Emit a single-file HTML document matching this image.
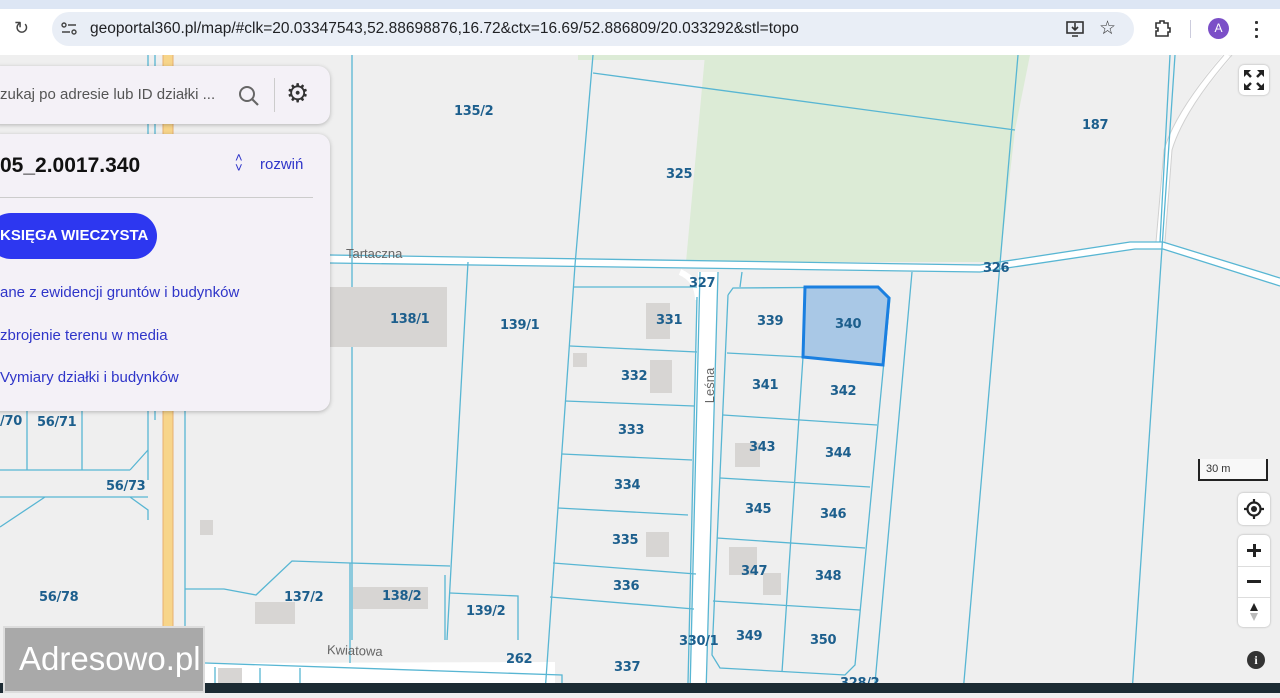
<!DOCTYPE html>
<html><head><meta charset="utf-8"><style>
*{margin:0;padding:0;box-sizing:border-box}
body{width:1280px;height:693px;overflow:hidden;position:relative;font-family:"Liberation Sans",sans-serif;background:#efefef}
.top{position:absolute;left:0;top:0;width:1280px;height:55px;background:#fff}
.tabs{position:absolute;left:0;top:0;width:1280px;height:9px;background:#dde6f4}
.url{position:absolute;left:52px;top:12px;width:1082px;height:34px;border-radius:17px;background:#e9eef6}
.url span{position:absolute;left:38px;top:8px;font-size:15.5px;color:#202124}
.map{position:absolute;left:0;top:55px}
.lbl{position:absolute;font-weight:bold;font-size:13px;color:#1d5f8d;font-family:"DejaVu Sans","Liberation Sans",sans-serif;letter-spacing:-0.3px}
.panel{position:absolute;background:#f4f1f7;border-radius:12px;box-shadow:0 1px 4px rgba(0,0,0,.25)}
.link{position:absolute;left:0;font-size:15px;color:#2f35c9}
.btn{position:absolute;background:#fff;border-radius:5px;box-shadow:0 0 2px rgba(0,0,0,.3)}
</style></head><body>
<div class="map">
<svg width="1280" height="638" viewBox="0 55 1280 638" xmlns="http://www.w3.org/2000/svg">
<rect x="0" y="55" width="1280" height="638" fill="#efefef"/>
<polygon points="705,55 1030,55 1015,130 1000,262 686,262" fill="#dcebd6"/>
<polygon points="578,55 705,55 705,60 578,60" fill="#dcebd6"/>
<!-- roads -->
<polygon points="330,255 980,265 1130,242 1163,242 1280,278 1280,286 1163,249 1135,249 980,272 330,263" fill="#fff"/>
<path d="M1228,55 Q1180,110 1168,150 L1160,242" stroke="#fff" stroke-width="8" fill="none"/>
<path d="M1224,55 Q1176,110 1164,150 L1156,242 M1232,55 Q1184,110 1172,150 L1165,242" stroke="#d0d0d0" stroke-width="1" fill="none"/>
<polygon points="698,272 718,272 706,693 690,693" fill="#fff"/>
<path d="M680,272 Q698,280 698,300" stroke="#fff" stroke-width="6" fill="none"/>
<polygon points="205,663 555,662 555,683 205,683" fill="#fff"/>
<rect x="163" y="55" width="10" height="628" fill="#f7d58a"/>
<path d="M163,55 V683 M173,55 V683" stroke="#e7b070" stroke-width="1"/>
<g stroke="#58b6d3" stroke-width="1.3" fill="none">
<path d="M330,255 L980,265 L1130,242 L1163,242 L1280,278"/>
<path d="M330,263 L980,272 L1135,249 L1163,249 L1280,286"/>
<path d="M593,55 L575,265 M593,73 L1015,130 M1018,55 L963,693 M1175,55 L1132,693 M1170,55 L1160,242"/>
<path d="M352,55 V640 M148,55 V480 M155,55 V420 M185,270 V683"/>
<path d="M0,470 H130 M27,411 V470 M82,411 V470 M0,497 H148 M0,527 L45,497 M130,470 L148,450 M130,497 L148,510 V520"/>
<path d="M468,262 L447,640 M575,265 L545,693"/>
<path d="M185,589 L224,589 L256,595 L292,561 L350,563 L450,566 M450,593 L518,596 L518,640 M205,663 L562,675 L562,693"/>
<path d="M573,287 L697,287 M570,346 L697,352 M565,401 L694,406 M562,454 L692,460 M558,508 L688,515 M553,563 L696,574 M550,597 L694,609 M697,297 L688,683 M700,272 L690,693 M718,272 L706,693"/>
<path d="M742,272 L740,287 M728,295 L733,288 L878,287 L890,298 L855,665 L845,675 L720,668 L712,655 L728,295"/>
<path d="M803,357 L782,672 M727,353 L803,357 M723,415 L877,425 M720,478 L870,487 M717,538 L865,548 M713,601 L860,610 M912,272 L875,683"/>
<path d="M445,575 V640 M350,563 V663 M215,667 V693 M260,668 V693 M300,668 V693"/>
</g>
<polygon points="805,287 878,287 889,298 883,365 803,357" fill="#a9c8e6" stroke="#1a7fe0" stroke-width="3"/>
<g fill="#d7d5d3">
<rect x="330" y="287" width="117" height="60"/><rect x="646" y="303" width="24" height="36"/><rect x="573" y="353" width="14" height="14"/><rect x="650" y="360" width="22" height="33"/>
<rect x="735" y="443" width="25" height="24"/><rect x="646" y="532" width="23" height="25"/><rect x="729" y="547" width="28" height="28"/><rect x="763" y="573" width="18" height="22"/>
<rect x="200" y="520" width="13" height="15"/><rect x="255" y="602" width="40" height="22"/><rect x="353" y="587" width="75" height="22"/><rect x="218" y="668" width="24" height="15"/>
</g>
</svg>
</div>
<div class="lbl" style="left:454px;top:104px">135/2</div>
<div class="lbl" style="left:666px;top:167px">325</div>
<div class="lbl" style="left:1082px;top:118px">187</div>
<div class="lbl" style="left:983px;top:261px">326</div>
<div class="lbl" style="left:689px;top:276px">327</div>
<div class="lbl" style="left:390px;top:312px">138/1</div>
<div class="lbl" style="left:500px;top:318px">139/1</div>
<div class="lbl" style="left:656px;top:313px">331</div>
<div class="lbl" style="left:621px;top:369px">332</div>
<div class="lbl" style="left:618px;top:423px">333</div>
<div class="lbl" style="left:614px;top:478px">334</div>
<div class="lbl" style="left:612px;top:533px">335</div>
<div class="lbl" style="left:613px;top:579px">336</div>
<div class="lbl" style="left:614px;top:660px">337</div>
<div class="lbl" style="left:679px;top:634px">330/1</div>
<div class="lbl" style="left:757px;top:314px">339</div>
<div class="lbl" style="left:835px;top:317px">340</div>
<div class="lbl" style="left:752px;top:378px">341</div>
<div class="lbl" style="left:830px;top:384px">342</div>
<div class="lbl" style="left:749px;top:440px">343</div>
<div class="lbl" style="left:825px;top:446px">344</div>
<div class="lbl" style="left:745px;top:502px">345</div>
<div class="lbl" style="left:820px;top:507px">346</div>
<div class="lbl" style="left:741px;top:564px">347</div>
<div class="lbl" style="left:815px;top:569px">348</div>
<div class="lbl" style="left:736px;top:629px">349</div>
<div class="lbl" style="left:810px;top:633px">350</div>
<div class="lbl" style="left:840px;top:676px">328/2</div>
<div class="lbl" style="left:0px;top:414px">/70</div>
<div class="lbl" style="left:37px;top:415px">56/71</div>
<div class="lbl" style="left:106px;top:479px">56/73</div>
<div class="lbl" style="left:39px;top:590px">56/78</div>
<div class="lbl" style="left:284px;top:590px">137/2</div>
<div class="lbl" style="left:382px;top:589px">138/2</div>
<div class="lbl" style="left:466px;top:604px">139/2</div>
<div class="lbl" style="left:506px;top:652px">262</div>
<div style="position:absolute;left:346px;top:246px;font-size:13px;color:#666">Tartaczna</div>
<div style="position:absolute;left:327px;top:643px;font-size:13px;color:#666;transform:rotate(2deg)">Kwiatowa</div>
<div style="position:absolute;left:692px;top:378px;font-size:13px;color:#666;transform:rotate(-90deg)">Leśna</div>

<div class="top"><div class="tabs"></div>
<div style="position:absolute;left:14px;top:18px;font-size:18px;color:#444">&#x21bb;</div>
<div class="url"><svg style="position:absolute;left:9px;top:10px" width="16" height="14"><circle cx="3" cy="3" r="2" fill="none" stroke="#444" stroke-width="1.4"/><path d="M7,3 H15 M1,10 H9" stroke="#444" stroke-width="1.4"/><circle cx="13" cy="10" r="2" fill="none" stroke="#444" stroke-width="1.4"/></svg><span>geoportal360.pl/map/#clk=20.03347543,52.88698876,16.72&amp;ctx=16.69/52.886809/20.033292&amp;stl=topo</span>
<svg style="position:absolute;left:1014px;top:9px" width="18" height="16"><rect x="1" y="1" width="16" height="11" fill="none" stroke="#333" stroke-width="1.6"/><path d="M9,2 V9 M6,6 L9,9 L12,6 M6,15 H12" stroke="#333" stroke-width="1.6" fill="none"/></svg>
<div style="position:absolute;left:1047px;top:5px;font-size:19px;color:#333">☆</div></div>
<svg style="position:absolute;left:1153px;top:20px" width="18" height="18"><path d="M3,3 H7 V1 H11 V3 H15 V8 H17 V12 H15 V16 H3 V11 H5 V8 H3 Z" fill="none" stroke="#333" stroke-width="1.6"/></svg>
<div style="position:absolute;left:1190px;top:20px;width:1px;height:18px;background:#ccd"></div>
<div style="position:absolute;left:1208px;top:18px;width:21px;height:21px;border-radius:50%;background:#7b4fc7;color:#fff;font-size:12px;text-align:center;line-height:21px">A</div>
<div style="position:absolute;left:1255px;top:19px;width:3px;height:20px;background:radial-gradient(circle,#333 1.5px,transparent 1.6px) 0 0/3px 7px"></div>
</div>

<div class="panel" style="left:-12px;top:66px;width:342px;height:58px">
<div style="position:absolute;left:12px;top:20px;font-size:15px;color:#555">zukaj po adresie lub ID działki ...</div>
<svg style="position:absolute;left:250px;top:19px" width="22" height="22"><circle cx="9" cy="9" r="7" fill="none" stroke="#666" stroke-width="2"/><path d="M14,14 L20,20" stroke="#666" stroke-width="2.2"/></svg>
<div style="position:absolute;left:286px;top:12px;width:1px;height:34px;background:#ccc"></div>
<div style="position:absolute;left:298px;top:12px;font-size:26px;color:#333;line-height:30px">⚙</div>
</div>
<div class="panel" style="left:-12px;top:134px;width:342px;height:277px">
<div style="position:absolute;left:12px;top:20px;font-size:21px;font-weight:bold;color:#111">05_2.0017.340</div>
<div style="position:absolute;left:247px;top:19px;font-size:13px;color:#2f35c9;line-height:10px">˄<br>˅</div>
<div style="position:absolute;left:272px;top:22px;font-size:15px;color:#2f35c9">rozwiń</div>
<div style="position:absolute;left:0;top:63px;width:325px;height:1px;background:#ccc"></div>
<div style="position:absolute;left:0;top:79px;width:169px;height:46px;border-radius:23px;background:#2d37f0;color:#fff;font-size:15px;font-weight:bold;line-height:46px;padding-left:12px">KSIĘGA WIECZYSTA</div>
<div class="link" style="left:12px;top:150px">ane z ewidencji gruntów i budynków</div>
<div class="link" style="left:12px;top:193px">zbrojenie terenu w media</div>
<div class="link" style="left:12px;top:235px">Vymiary działki i budynków</div>
</div>

<div class="btn" style="left:1239px;top:65px;width:30px;height:30px"><svg width="30" height="30"><g stroke="#222" stroke-width="2.5" fill="#222"><path d="M6,6 L12,12 M24,6 L18,12 M6,24 L12,18 M24,24 L18,18"/></g><g fill="#222"><path d="M5,5 H12 L5,12Z M25,5 H18 L25,12Z M5,25 H12 L5,18Z M25,25 H18 L25,18Z"/></g></svg></div>
<div style="position:absolute;left:1198px;top:459px;width:70px;height:22px;background:#f8f8f8;border:2px solid #222;border-top:none;font-size:11px;color:#333;padding:4px 6px">30 m</div>
<div class="btn" style="left:1238px;top:493px;width:32px;height:32px"><svg width="32" height="32"><circle cx="16" cy="16" r="6.5" fill="none" stroke="#222" stroke-width="2.2"/><circle cx="16" cy="16" r="3" fill="#222"/><path d="M16,6 V9 M16,23 V26 M6,16 H9 M23,16 H26" stroke="#222" stroke-width="2.2"/></svg></div>
<div class="btn" style="left:1238px;top:535px;width:32px;height:92px">
<div style="position:absolute;left:9px;top:14px;width:14px;height:3px;background:#222"></div><div style="position:absolute;left:14.5px;top:9px;width:3px;height:13px;background:#222"></div>
<div style="position:absolute;left:0;top:31px;width:32px;height:1px;background:#ddd"></div>
<div style="position:absolute;left:9px;top:45px;width:14px;height:3px;background:#222"></div>
<div style="position:absolute;left:0;top:62px;width:32px;height:1px;background:#ddd"></div>
<svg style="position:absolute;left:10px;top:66px" width="12" height="22"><path d="M6,2 L10,10 H2Z" fill="#222"/><path d="M6,20 L10,12 H2Z" fill="#bbb"/></svg></div>
<div style="position:absolute;left:1247px;top:651px;width:18px;height:18px;border-radius:50%;background:#333;color:#fff;font-weight:bold;font-size:12px;text-align:center;line-height:18px;font-family:'Liberation Serif',serif">i</div>

<div style="position:absolute;left:0;top:683px;width:1280px;height:10px;background:#1c2b33"></div>
<div style="position:absolute;left:3px;top:626px;width:202px;height:67px;background:#a9a9a9;border:2px solid #ddd;color:#fff;font-size:33px;padding:12px 0 0 14px">Adresowo.pl</div>
</body></html>
